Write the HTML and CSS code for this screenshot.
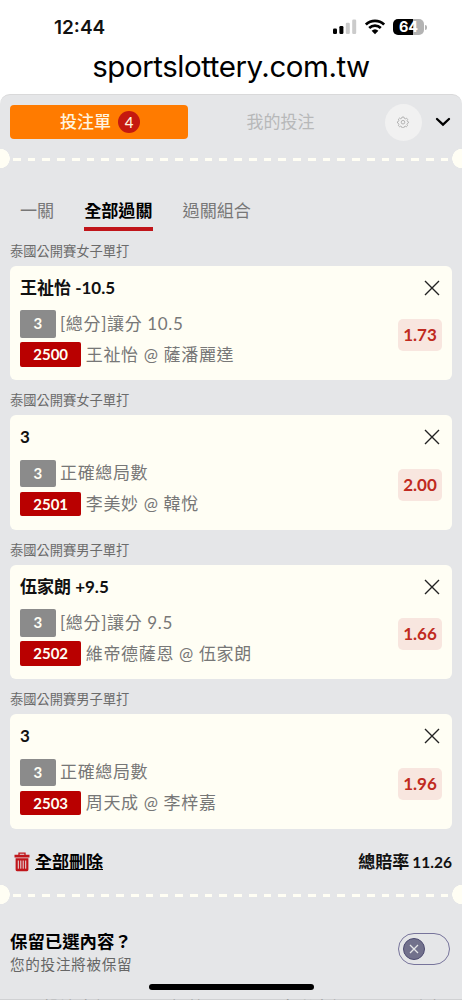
FILE: index.html
```html
<!DOCTYPE html>
<html lang="zh-Hant">
<head>
  <meta charset="utf-8">
  <title>投注單</title>
  <link rel="stylesheet" href="styles.css">
</head>
<body>
  <!-- 狀態列 -->
  <div class="status-bar">
    <span class="clock">12:44</span>
    <div class="status-icons">
      <svg width="24" height="16" viewBox="0 0 24 16">
        <rect x="0" y="9.5" width="4" height="5.5" rx="1.2"/>
        <rect x="6.4" y="7" width="4" height="8" rx="1.2"/>
        <rect x="12.8" y="3.8" width="4" height="11.2" rx="1.2" fill="#cbcbcb"/>
        <rect x="19.2" y="0.6" width="4" height="14.4" rx="1.2" fill="#cbcbcb"/>
      </svg>
      <svg class="wifi" width="20" height="16" viewBox="0 0 20 16">
        <path d="M.9 5.6a13.2 13.2 0 0 1 18.2 0M4.2 9a8.5 8.5 0 0 1 11.6 0" fill="none" stroke="#000" stroke-width="2.7"/>
        <path d="M6.6 11.7a5.1 5.1 0 0 1 6.8 0L10 15.2z"/>
      </svg>
      <span class="battery">64</span>
      <span class="battery-cap"></span>
    </div>
  </div>
  <div class="url-bar">sportslottery.com.tw</div>

  <div class="panel">
    <div class="header">
      <button class="btn-slip"><span class="slip-text">投注單</span><span class="count">4</span></button>
      <button class="btn-mine">我的投注</button>
      <button class="btn-setting">
        <svg width="12" height="12" viewBox="0 0 12 12" fill="none" stroke="#a4a4a4" stroke-width="0.8">
          <path d="M5.1 1h1.8l.4 1.3 1.1.5 1.2-.6 1.1 1.2-.6 1.1.4 1 .9.3v1.1l-1 .6-.4 1 .5 1.1-1.1 1.1-1.2-.5-1 .5-.4 1.2H5.1l-.4-1.2-1-.5-1.2.5-1.1-1.1.5-1.1-.4-1-1-.5V5.7l1-.4.4-1-.5-1.1 1.1-1.1 1.2.6 1-.5z"/>
          <circle cx="6" cy="6.2" r="1.8"/>
        </svg>
      </button>
      <svg class="chevron" width="16" height="10" viewBox="0 0 16 10" fill="none" stroke="#000" stroke-width="2.3" stroke-linecap="round">
        <path d="M2 2l6 5.7L14 2"/>
      </svg>
    </div>

    <div class="divider"></div>

    <div class="tabs">
      <div class="tab">一關</div>
      <div class="tab active">全部過關</div>
      <div class="tab">過關組合</div>
    </div>

    <!-- 投注項目 -->
    <div class="bets">
      <div class="league">泰國公開賽女子單打</div>
      <div class="card">
        <div class="card-title">
          <span>王祉怡 -10.5</span>
          <svg class="close" viewBox="0 0 16 16"><path d="M1 1l14 14M15 1L1 15"/></svg>
        </div>
        <div class="card-body">
          <div class="info">
            <div class="line"><span class="tag">3</span>[總分]讓分 10.5</div>
            <div class="line"><span class="tag tag-code">2500</span>王祉怡 @ 薩潘麗達</div>
          </div>
          <div class="odds">1.73</div>
        </div>
      </div>

      <div class="league">泰國公開賽女子單打</div>
      <div class="card">
        <div class="card-title">
          <span>3</span>
          <svg class="close" viewBox="0 0 16 16"><path d="M1 1l14 14M15 1L1 15"/></svg>
        </div>
        <div class="card-body">
          <div class="info">
            <div class="line"><span class="tag">3</span>正確總局數</div>
            <div class="line"><span class="tag tag-code">2501</span>李美妙 @ 韓悅</div>
          </div>
          <div class="odds">2.00</div>
        </div>
      </div>

      <div class="league">泰國公開賽男子單打</div>
      <div class="card">
        <div class="card-title">
          <span>伍家朗 +9.5</span>
          <svg class="close" viewBox="0 0 16 16"><path d="M1 1l14 14M15 1L1 15"/></svg>
        </div>
        <div class="card-body">
          <div class="info">
            <div class="line"><span class="tag">3</span>[總分]讓分 9.5</div>
            <div class="line"><span class="tag tag-code">2502</span>維帝德薩恩 @ 伍家朗</div>
          </div>
          <div class="odds">1.66</div>
        </div>
      </div>

      <div class="league">泰國公開賽男子單打</div>
      <div class="card">
        <div class="card-title">
          <span>3</span>
          <svg class="close" viewBox="0 0 16 16"><path d="M1 1l14 14M15 1L1 15"/></svg>
        </div>
        <div class="card-body">
          <div class="info">
            <div class="line"><span class="tag">3</span>正確總局數</div>
            <div class="line"><span class="tag tag-code">2503</span>周天成 @ 李梓嘉</div>
          </div>
          <div class="odds">1.96</div>
        </div>
      </div>
    </div>

    <div class="summary">
      <svg width="16" height="20" viewBox="0 0 16 20">
        <path d="M5 3V1.2h6V3" fill="none" stroke="#c0151a" stroke-width="1.3"/>
        <path d="M.5 2.8h15v2.7H.5zM1.6 6.3h12.8v11.5q0 1.4-1.4 1.4H3q-1.4 0-1.4-1.4z" fill="#c0151a"/>
        <path d="M4.3 8.5v8.2M6.8 8.5v8.2M9.2 8.5v8.2M11.7 8.5v8.2" stroke="#e5e6e8" stroke-width="1"/>
      </svg>
      <a class="delete-all">全部刪除</a>
      <span class="total">總賠率 <span class="total-num">11.26</span></span>
    </div>

    <div class="divider"></div>

    <div class="keep">
      <div>
        <div class="keep-title">保留已選內容？</div>
        <div class="keep-desc">您的投注將被保留</div>
      </div>
      <div class="toggle">
        <span class="knob">
          <svg width="10" height="10" viewBox="0 0 10 10" stroke="#e5e6e8" stroke-width="1.3"><path d="M1 1l8 8M9 1L1 9"/></svg>
        </span>
      </div>
    </div>

    <div class="stakes">
      <span>單投注金額</span>
      <span>組數</span>
      <span>可贏彩金額</span>
      <span>刪除</span>
    </div>
  </div>

  <div class="home-bar"></div>
</body>
</html>
```

FILE: styles.css
```css
* {
  box-sizing: border-box;
}

body {
  width: 462px;
  height: 1000px;
  margin: 0;
  overflow: hidden;
  background: #fff;
  color: #111;
  font-family: Lato, 'Noto Sans CJK TC', sans-serif;
  font-size: 17px;
}

button {
  border: none;
  padding: 0;
  font-family: inherit;
  font-size: 17px;
}

svg {
  display: block;
  flex-shrink: 0;
}

/* 狀態列 */
.status-bar {
  height: 44px;
  padding: 10px 35px 0 54px;
  display: flex;
  align-items: center;
  justify-content: space-between;
  font-family: Inter, sans-serif;
}

.clock {
  font-size: 19px;
  font-weight: 600;
}

.status-icons {
  display: flex;
  align-items: center;
}

.wifi {
  margin: 0 8px 0 8.5px;
}

.battery {
  width: 31px;
  height: 16px;
  border-radius: 5px;
  background: linear-gradient(90deg, #000 64%, #b3b3b3 64%);
  color: #fff;
  font-size: 14.5px;
  font-weight: 700;
  line-height: 16px;
  text-align: center;
}

.battery-cap {
  width: 2px;
  height: 5px;
  margin-left: 1px;
  border-radius: 0 2px 2px 0;
  background: #b3b3b3;
}

.url-bar {
  height: 50px;
  line-height: 44px;
  text-align: center;
  font-family: Inter, sans-serif;
  font-size: 29.5px;
  letter-spacing: -0.45px;
  color: #000;
}

.panel {
  height: 906px;
  overflow: hidden;
  border-top: 1px solid #d9d9da;
  border-radius: 10px 10px 0 0;
  background: #e5e6e8;
}

.header {
  height: 54px;
  padding: 0 11px 0 10px;
  display: flex;
  align-items: center;
}

.btn-slip {
  width: 178px;
  height: 34px;
  border-radius: 4px;
  background: #ff7b00;
  color: #fff3df;
  font-weight: 500;
  display: flex;
  align-items: center;
  justify-content: center;
}

.slip-text {
  padding: 0 0 3px 2px;
}

.count {
  width: 22px;
  height: 22px;
  margin-left: 7px;
  border-radius: 50%;
  background: #c5190f;
  color: #fff3df;
  font-size: 15px;
  line-height: 22px;
}

.btn-mine {
  width: 185px;
  padding-bottom: 3px;
  background: none;
  color: #b7b8b9;
}

.btn-setting {
  width: 37px;
  height: 37px;
  margin-left: 11.5px;
  border-radius: 50%;
  background: #f1f1f1;
  display: flex;
  align-items: center;
  justify-content: center;
}

.chevron {
  margin-left: auto;
}

/* 票券撕線 */
.divider {
  height: 20px;
  background:
    radial-gradient(circle at 0 9.5px, #fffef4 9.5px, transparent 10px),
    radial-gradient(circle at 100% 9.5px, #fffef4 9.5px, transparent 10px),
    repeating-linear-gradient(90deg, #fffef4 0 7.6px, transparent 7.6px 14.75px) 13px 9px / 436px 3px no-repeat;
}

.tabs {
  height: 62px;
  padding: 22px 20px 0;
  display: flex;
  align-items: flex-start;
  gap: 30px;
}

.tab {
  height: 40px;
  line-height: 39px;
  font-size: 17.1px;
  color: #777;
}

.tab.active {
  border-bottom: 4px solid #c0151a;
  color: #000;
  font-weight: 700;
}

.bets {
  padding: 0 10px;
}

.league {
  height: 34.8px;
  line-height: 40px;
  font-size: 13.25px;
  color: #6b6b6b;
}

.card {
  height: 114.7px;
  padding: 10px 10px 0;
  border-radius: 6px;
  background: #fffef4;
}

.card-title {
  height: 24px;
  margin-bottom: 10.5px;
  display: flex;
  align-items: center;
  justify-content: space-between;
  font-weight: 700;
  line-height: 24px;
}

.close {
  width: 16px;
  height: 16px;
  margin-right: 2px;
  fill: none;
  stroke: #222;
  stroke-width: 1.4;
}

.card-body {
  display: flex;
  justify-content: space-between;
}

.info {
  display: flex;
  flex-direction: column;
  gap: 4.7px;
}

.line {
  display: flex;
  align-items: center;
  line-height: 24px;
  letter-spacing: 0.65px;
  color: #777;
}

.tag {
  width: 35.5px;
  height: 27.3px;
  margin-right: 4.5px;
  border-radius: 2px;
  background: #8b8b8b;
  color: #fffef4;
  font-size: 15px;
  font-weight: 700;
  line-height: 27px;
  letter-spacing: 0;
  text-align: center;
}

.tag-code {
  width: 61.3px;
  height: 24.5px;
  background: #b90000;
  line-height: 24px;
}

.odds {
  width: 44px;
  height: 32px;
  margin-top: 9px;
  border-radius: 5px;
  background: #f8e6df;
  color: #c02a20;
  font-weight: 700;
  line-height: 32px;
  text-align: center;
}

.summary {
  height: 56px;
  padding: 8px 10px 0 14px;
  display: flex;
  align-items: flex-start;
  line-height: 26px;
}

.summary svg {
  margin: 15px 5px 0 0;
}

.delete-all {
  margin-top: 12px;
  font-weight: 700;
  color: #000;
  text-decoration: underline;
}

.total {
  margin: 12px 0 0 auto;
  font-weight: 700;
}

.total-num {
  font-size: 15.5px;
  margin-left: -1px;
}

.keep {
  height: 94px;
  padding: 25px 12px 0 10px;
  display: flex;
  justify-content: space-between;
}

.keep-title {
  line-height: 24px;
  font-size: 17.4px;
  font-weight: 700;
  color: #000;
}

.keep-desc {
  line-height: 22px;
  font-size: 14.6px;
  letter-spacing: 0.7px;
  color: #666;
}

.toggle {
  width: 52px;
  height: 32.5px;
  margin-top: 3px;
  padding-left: 4px;
  border: 1.4px solid #77749b;
  border-radius: 17px;
  display: flex;
  align-items: center;
}

.knob {
  width: 22px;
  height: 22px;
  border: 1.5px solid #4c4a70;
  border-radius: 50%;
  background: #72718c;
  display: flex;
  align-items: center;
  justify-content: center;
}

.stakes {
  padding: 0 22px 0 26px;
  display: flex;
  justify-content: space-between;
  line-height: 18px;
  background: #d0d1d3;
  color: #999;
}

.home-bar {
  position: absolute;
  left: 149px;
  top: 984px;
  width: 165px;
  height: 6px;
  border-radius: 3px;
  background: #000;
}
```
